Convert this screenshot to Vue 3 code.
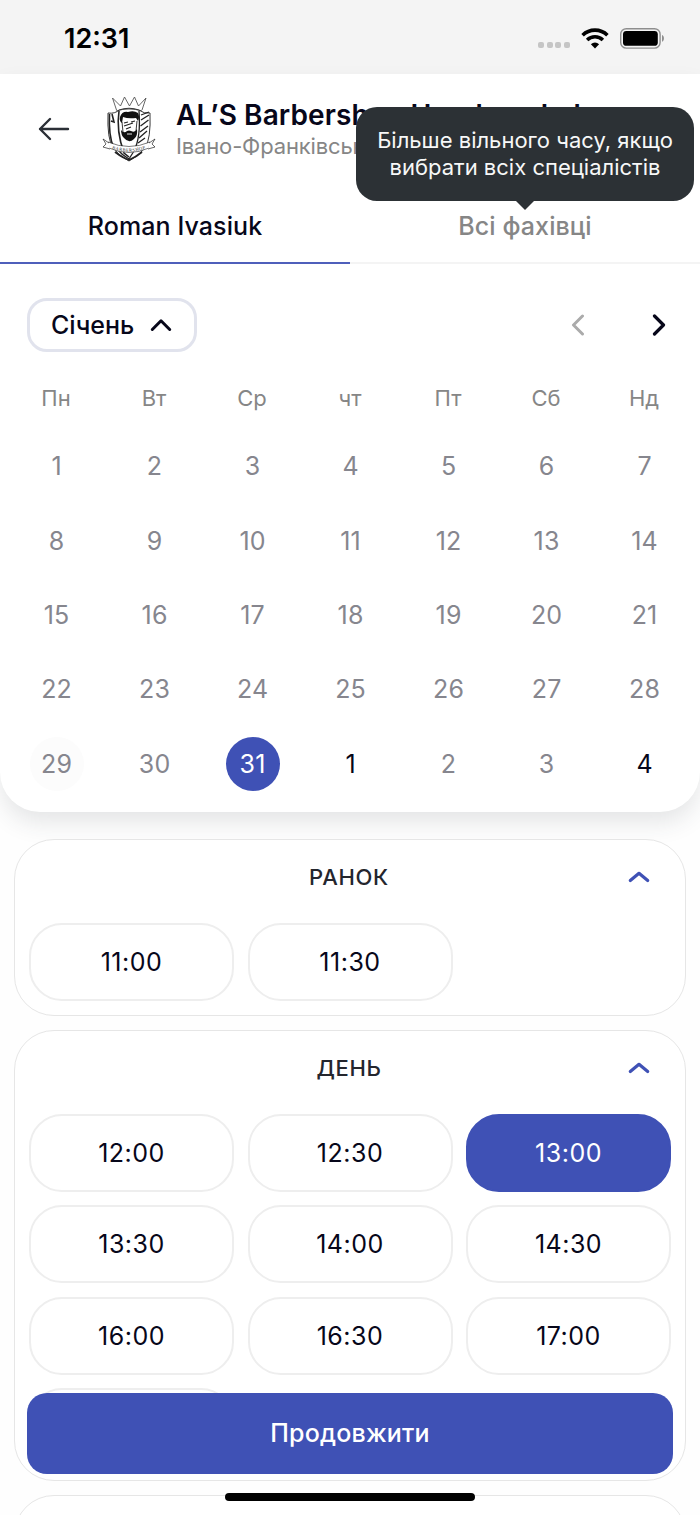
<template>
    <div class="screen">
        <div class="status-bar">
            <span class="status-time">12:31</span>
            <div class="status-icons">
                <div class="signal">
                    <span v-for="n in 4" :key="n"></span>
                </div>
                <svg class="wifi" width="28" height="21" viewBox="0 0 28 21">
                    <path d="M1.6 7.2a17.8 17.8 0 0 1 24.8 0" fill="none" stroke="#000" stroke-width="3.6" />
                    <path d="M6.1 12a11.4 11.4 0 0 1 15.8 0" fill="none" stroke="#000" stroke-width="3.5" />
                    <path d="M14 20.4l-4.1-4.2a6 6 0 0 1 8.2 0z" fill="#000" />
                </svg>
                <svg class="battery" width="45" height="21" viewBox="0 0 45 21">
                    <rect x="0.7" y="0.7" width="39.4" height="19.4" rx="5.6" fill="none" stroke="#8e8e8e" stroke-width="1.4" />
                    <rect x="3" y="3" width="34.8" height="14.8" rx="3.4" fill="#000" />
                    <path d="M42 7c2.6 1 2.6 5.8 0 6.8z" fill="#8e8e8e" />
                </svg>
            </div>
        </div>

        <div class="booking-card">
            <header class="header">
                <button class="back-btn">
                    <svg width="32" height="24" viewBox="0 0 32 24" fill="none" stroke="#2b2f36" stroke-width="2.4" stroke-linecap="round" stroke-linejoin="round">
                        <path d="M30 12H2M12 2L2 12l10 10" />
                    </svg>
                </button>
                <svg class="logo" width="54" height="66" viewBox="0 0 54 66" fill="none" stroke="#222" stroke-width="0.9">
                    <path d="M14.5 14L10.5 2l8 8 4-9 5 9 5-9 4 9 7.500-8-4 12" stroke="#555" />
                    <path d="M14 15q13-4 26 0" stroke="#555" />
                    <path d="M6 17q7 1 11-3 10-3.500 20 0 5 4 11 3 1 26-5 35-6 8-16 13-10-5-16-13-6-9-5-35z" />
                    <path d="M7.500 18q-1 22 4 33M10 18l2 8-3-1M17 15q-3 20 5 42l5 4" stroke-width="1.600" />
                    <path d="M37 15q2 26-5 40l-5 8q-7-4-12-10" stroke-width="1.300" />
                    <path d="M39 19l8-3M39 24l8-5M38.500 30l8-6M38 36l8-6M37 42l8-7M36 47l7-5" stroke-width="1.300" />
                    <path d="M18 21q2-6 8-5 6-2 10 1 2 4 0 8l-2-3q-8 1-13-1l-1 6q-3-2-2-6z" fill="#111" stroke="none" />
                    <path d="M20 26l1 10M35 25l-1 10" />
                    <path d="M22 27l4-1M29 26l4-1M22 30l9-3M24 33l5-2" stroke-width="1.200" />
                    <path d="M19 34q3 4 6 1 2-1 4 0 4 2 6-2 1 7-3 10-5 5-10-1-3-3-3-8z" fill="#111" stroke="none" />
                    <path d="M25 38h5" stroke="#fff" />
                    <path d="M6 46q21 9 42 0l-1 6q-20 9-40 0z" fill="#fff" stroke-width="0.6" />
                    <path d="M7 47l-6-4 3 5-3 3 7 2M47 47l6-4-3 5 3 3-7 2" fill="#fff" stroke-width="0.7" />
                    <path id="ribbon-arc" d="M9 52.300q18 6.500 36 0" stroke="none" />
                    <text class="ribbon-text"><textPath href="#ribbon-arc" startOffset="1" textLength="34">BARBERSHOP</textPath></text>
                    <path d="M13 56q8 6 14 8 7-3 13-8" stroke-width="1.800" />
                </svg>
                <div class="shop">
                    <h1 class="shop-name">AL’S Barbershop Hrushevskoho</h1>
                    <p class="shop-address">Івано-Франківськ</p>
                </div>
            </header>

            <div class="tabs">
                <button
                    v-for="tab in tabs"
                    :key="tab"
                    class="tab"
                    :class="{ active: tab === activeTab }"
                    @click="activeTab = tab"
                >
                    {{ tab }}
                </button>
                <div class="tooltip">Більше вільного часу, якщо<br />вибрати всіх спеціалістів</div>
            </div>

            <div class="month-row">
                <button class="month-btn">
                    <span>Січень</span>
                    <svg width="22" height="14" viewBox="0 0 22 14" fill="none" stroke="#07071a" stroke-width="3" stroke-linecap="round" stroke-linejoin="round">
                        <path d="M2.3 11.5L11 2.8l8.7 8.7" />
                    </svg>
                </button>
                <div class="month-nav">
                    <svg width="14" height="22" viewBox="0 0 14 22" fill="none" stroke="#ababab" stroke-width="3" stroke-linecap="round" stroke-linejoin="round">
                        <path d="M11.5 2L2.5 11l9 9" />
                    </svg>
                    <svg width="14" height="22" viewBox="0 0 14 22" fill="none" stroke="#07071a" stroke-width="3.2" stroke-linecap="round" stroke-linejoin="round">
                        <path d="M2.5 2l9 9-9 9" />
                    </svg>
                </div>
            </div>

            <div class="weekdays">
                <span v-for="name in weekdays" :key="name">{{ name }}</span>
            </div>
            <div class="days">
                <div v-for="(day, i) in days" :key="i" class="day-cell">
                    <span class="day" :class="day.state">{{ day.label }}</span>
                </div>
            </div>
        </div>

        <div class="periods">
            <section v-for="period in periods" :key="period.title" class="period">
                <div class="period-header">
                    <h2 class="period-title">{{ period.title }}</h2>
                    <svg class="period-arrow" width="22" height="12" viewBox="0 0 22 12" fill="none" stroke="#3f51b5" stroke-width="3.2" stroke-linecap="round" stroke-linejoin="round">
                        <path d="M2.3 9.5L11 2.3l8.7 7.2" />
                    </svg>
                </div>
                <div class="slots">
                    <button
                        v-for="time in period.slots"
                        :key="time"
                        class="slot"
                        :class="{ selected: time === selectedTime }"
                        @click="selectedTime = time"
                    >
                        {{ time }}
                    </button>
                </div>
            </section>
            <section class="period"></section>
        </div>

        <button class="continue-btn">Продовжити</button>
        <div class="home-indicator"></div>
    </div>
</template>

<script setup>
import { ref } from 'vue';

const tabs = ['Roman Ivasiuk', 'Всі фахівці'];
const activeTab = ref(tabs[0]);
const selectedTime = ref('13:00');

const weekdays = ['Пн', 'Вт', 'Ср', 'чт', 'Пт', 'Сб', 'Нд'];

const states = { 29: 'today', 31: 'selected', 32: 'available', 35: 'available' };

// 31 days of January followed by the first days of February
const days = Array.from({ length: 35 }, (_, i) => ({
    label: i < 31 ? i + 1 : i - 30,
    state: states[i + 1]
}));

const periods = [
    { title: 'РАНОК', slots: ['11:00', '11:30'] },
    {
        title: 'ДЕНЬ',
        slots: ['12:00', '12:30', '13:00', '13:30', '14:00', '14:30', '16:00', '16:30', '17:00', '17:30']
    }
];
</script>

<style>
body {
    background: #fdfdfd;
}
</style>

<style scoped>
.screen {
    position: relative;
    width: 700px;
    height: 1515px;
    overflow: hidden;
    background: #fefefe;
    color: #07071a;
    font-family: Inter, "Liberation Sans", sans-serif;
}

button {
    padding: 0;
    border: none;
    background: transparent;
    color: inherit;
    font: inherit;
    cursor: pointer;
}

.status-bar {
    display: flex;
    align-items: center;
    justify-content: space-between;
    box-sizing: border-box;
    height: 74px;
    padding: 3px 36px 0 64px;
    background: #f4f4f4;
}

.status-time {
    color: #000;
    font-size: 27px;
    font-weight: 600;
}

.status-icons {
    display: flex;
    align-items: center;
}

.signal {
    display: flex;
    gap: 2.6px;
    margin: 13px 11px 0 0;
}

.signal span {
    width: 6px;
    height: 6px;
    border-radius: 2px;
    background: #c5c5c5;
}

.wifi {
    margin-right: 11px;
}

.battery {
    margin-right: -1px;
}

.booking-card {
    position: relative;
    box-sizing: border-box;
    height: 738px;
    border-radius: 0 0 40px 40px;
    background: #fff;
    box-shadow: 0 12px 24px -2px rgba(44, 52, 60, 0.13);
}

.header {
    display: flex;
    align-items: center;
    box-sizing: border-box;
    height: 108px;
    padding: 1px 0 0 38px;
}

.back-btn {
    height: 24px;
}

.back-btn svg {
    display: block;
}

.logo {
    margin-left: 32px;
}

.ribbon-text {
    fill: #222;
    stroke: none;
    font-family: "Liberation Serif", serif;
    font-size: 4.5px;
}

.shop {
    margin-left: 20px;
    white-space: nowrap;
}

.shop-name {
    margin: 0;
    font-size: 28px;
    font-weight: 600;
    line-height: 34px;
    letter-spacing: 0.1px;
}

.shop-address {
    margin: 0;
    color: #868686;
    font-size: 22px;
    line-height: 28px;
    letter-spacing: -0.15px;
}

.tabs {
    position: relative;
    display: flex;
    height: 82px;
}

.tab {
    flex: 1;
    padding-top: 7px;
    border-bottom: 2px solid #f4f4f4;
    color: #868686;
    font-size: 25px;
    font-weight: 500;
    letter-spacing: 0.1px;
}

.tab.active {
    border-bottom-color: #4f5fbb;
    color: #07071a;
}

.tooltip {
    position: absolute;
    right: 6px;
    bottom: 63px;
    box-sizing: border-box;
    width: 338px;
    height: 94px;
    padding-top: 20px;
    border-radius: 21px;
    background: #2c3135;
    color: #f7f8f8;
    font-size: 22px;
    line-height: 27px;
    text-align: center;
    white-space: nowrap;
}

.tooltip::after {
    content: "";
    position: absolute;
    top: 100%;
    left: 50%;
    margin-left: -9px;
    border: 9px solid transparent;
    border-bottom: none;
    border-top-color: #2c3135;
}

.month-row {
    display: flex;
    align-items: center;
    justify-content: space-between;
    padding: 34px 34px 0 27px;
}

.month-btn {
    display: flex;
    align-items: center;
    justify-content: space-between;
    box-sizing: border-box;
    width: 170px;
    height: 54px;
    padding: 0 22px 1px 21px;
    border: 3px solid #e1e3ed;
    border-radius: 20px;
    font-size: 25px;
    font-weight: 500;
}

.month-nav {
    display: flex;
    gap: 67px;
}

.weekdays,
.days {
    display: grid;
    grid-template-columns: repeat(7, 98px);
    padding: 0 7px;
    text-align: center;
}

.weekdays {
    margin-top: 32px;
    color: #868686;
    font-size: 22px;
    line-height: 28px;
}

.days {
    grid-auto-rows: 74.4px;
    margin-top: 17px;
    padding-left: 7.6px;
}

.day-cell {
    display: flex;
    align-items: center;
    justify-content: center;
}

.day {
    width: 54px;
    height: 54px;
    border-radius: 50%;
    color: #86868e;
    font-size: 25px;
    line-height: 54px;
    letter-spacing: 0.2px;
}

.day.today {
    background: #fcfcfc;
}

.day.selected {
    background: #3f51b5;
    color: #fff;
}

.day.available {
    color: #07071a;
}

.periods {
    display: flex;
    flex-direction: column;
    gap: 14px;
    padding: 27px 14px 0;
    position: relative;
}

.period {
    box-sizing: border-box;
    min-height: 120px;
    padding: 0 14px 14px;
    border: 1px solid #e6e6e6;
    border-radius: 40px;
    background: #fff;
}

.period-header {
    display: grid;
    grid-template-columns: 1fr auto 1fr;
    align-items: center;
    height: 83px;
}

.period-title {
    grid-column: 2;
    margin: 0 2px 9px 0;
    color: #24262e;
    font-size: 22px;
    font-weight: 450;
    letter-spacing: 0.7px;
}

.period-arrow {
    justify-self: end;
    margin: 0 21px 9px 0;
}

.slots {
    display: grid;
    grid-template-columns: repeat(3, 205px);
    justify-content: space-between;
    gap: 13.3px;
}

.slot {
    box-sizing: border-box;
    height: 78px;
    border: 2px solid #eee;
    border-radius: 33px;
    font-size: 25px;
    letter-spacing: 0.5px;
}

.slot.selected {
    border-color: #3f51b5;
    background: #3f51b5;
    color: #fff;
}

.continue-btn {
    position: absolute;
    left: 27px;
    bottom: 41px;
    width: 646px;
    height: 81px;
    border-radius: 20px;
    background: #3f51b5;
    color: #fff;
    font-size: 25px;
    font-weight: 500;
    letter-spacing: 0.2px;
    padding-bottom: 1px;
}

.home-indicator {
    position: absolute;
    left: 225px;
    bottom: 14px;
    width: 250px;
    height: 8px;
    border-radius: 4px;
    background: #000;
}
</style>
